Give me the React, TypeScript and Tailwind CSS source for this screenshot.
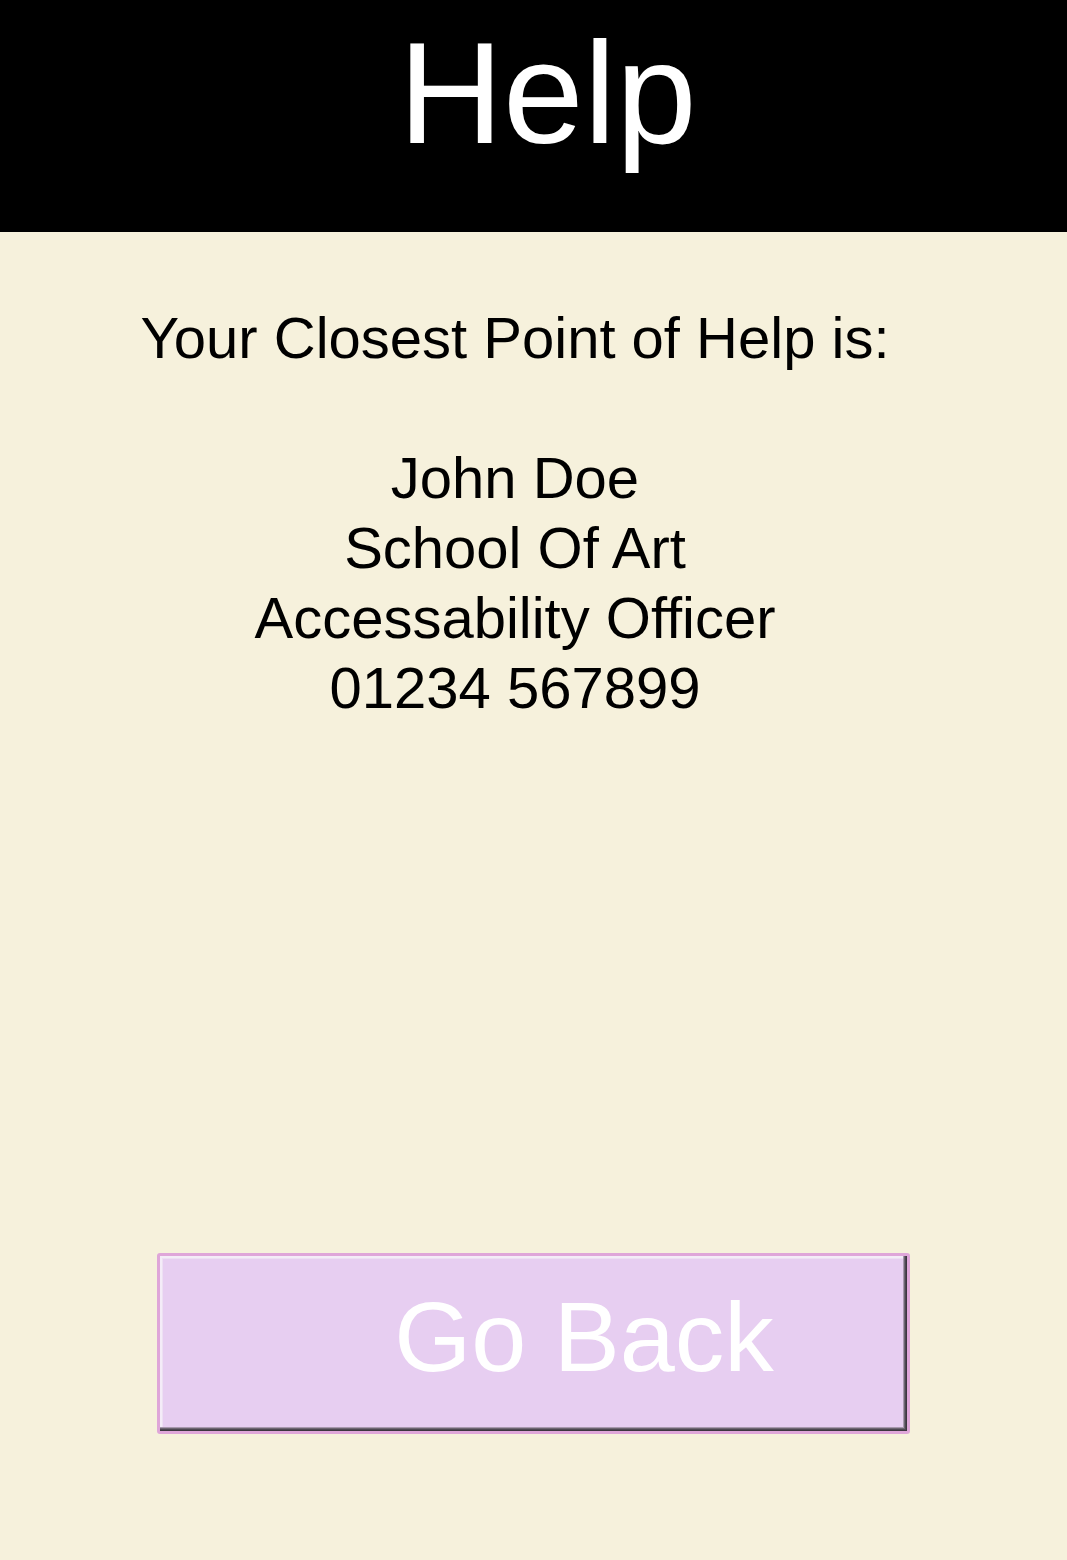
export default function App() {
  return (
    <div className="min-h-[1560px] w-full bg-[#f6f1dc] flex flex-col" style={{ fontFamily: '"Liberation Sans", Arial, sans-serif' }}>
      <header className="h-[232px] bg-black flex justify-center pt-[21px] pl-[28px]">
        <h1 className="text-[145px] leading-[145px] text-white font-normal">Help</h1>
      </header>
      <main className="flex flex-col items-center pt-[71px] pr-[37px] text-black text-[58px] leading-[70px] text-center">
        <p>Your Closest Point of Help is:</p>
        <p className="h-[70px]"></p>
        <p>John Doe</p>
        <p>School Of Art</p>
        <p>Accessability Officer</p>
        <p>01234 567899</p>
      </main>
      <div className="flex justify-start pl-[157px] mt-[530px]">
        <button className="w-[753px] h-[181px] border-[3px] border-[#dfa6d9] rounded-[3px] bg-[#e7cef1] shadow-[inset_-1px_-1px_0_#3c3640,inset_-2px_-2px_0_#4e4852,inset_-3px_-3px_0_#6e6672,inset_-4px_-4px_0_#a898ae,inset_2px_2px_0_#f4ecf8,inset_3px_3px_0_#ede0f3] flex items-start justify-center pl-[101px] pt-[31px]">
          <span className="text-[99px] leading-[99px] text-white">Go Back</span>
        </button>
      </div>
    </div>
  );
}
